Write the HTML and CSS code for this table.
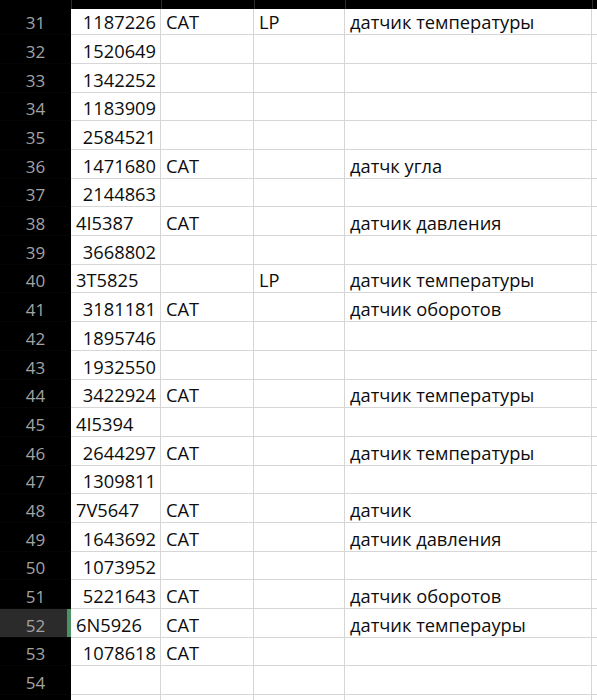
FILE: index.html
```html
<!DOCTYPE html>
<html lang="ru">
<head>
<meta charset="utf-8">
<title>Sheet</title>
<link rel="stylesheet" href="styles.css">
</head>
<body>
<div class="sheet">
  <div class="row colhead"><span class="hc"></span><span class="hc"></span><span class="hc"></span><span class="hc"></span><span class="hc"></span><span class="hc"></span></div>
  <div class="row first"><span class="rh">31</span><span class="c num">1187226</span><span class="c">CAT</span><span class="c">LP</span><span class="c">датчик температуры</span><span class="c"></span></div>
  <div class="row"><span class="rh">32</span><span class="c num">1520649</span><span class="c"></span><span class="c"></span><span class="c"></span><span class="c"></span></div>
  <div class="row"><span class="rh">33</span><span class="c num">1342252</span><span class="c"></span><span class="c"></span><span class="c"></span><span class="c"></span></div>
  <div class="row"><span class="rh">34</span><span class="c num">1183909</span><span class="c"></span><span class="c"></span><span class="c"></span><span class="c"></span></div>
  <div class="row"><span class="rh">35</span><span class="c num">2584521</span><span class="c"></span><span class="c"></span><span class="c"></span><span class="c"></span></div>
  <div class="row"><span class="rh">36</span><span class="c num">1471680</span><span class="c">CAT</span><span class="c"></span><span class="c">датчк угла</span><span class="c"></span></div>
  <div class="row"><span class="rh">37</span><span class="c num">2144863</span><span class="c"></span><span class="c"></span><span class="c"></span><span class="c"></span></div>
  <div class="row"><span class="rh">38</span><span class="c">4I5387</span><span class="c">CAT</span><span class="c"></span><span class="c">датчик давления</span><span class="c"></span></div>
  <div class="row"><span class="rh">39</span><span class="c num">3668802</span><span class="c"></span><span class="c"></span><span class="c"></span><span class="c"></span></div>
  <div class="row"><span class="rh">40</span><span class="c">3T5825</span><span class="c"></span><span class="c">LP</span><span class="c">датчик температуры</span><span class="c"></span></div>
  <div class="row"><span class="rh">41</span><span class="c num">3181181</span><span class="c">CAT</span><span class="c"></span><span class="c">датчик оборотов</span><span class="c"></span></div>
  <div class="row"><span class="rh">42</span><span class="c num">1895746</span><span class="c"></span><span class="c"></span><span class="c"></span><span class="c"></span></div>
  <div class="row"><span class="rh">43</span><span class="c num">1932550</span><span class="c"></span><span class="c"></span><span class="c"></span><span class="c"></span></div>
  <div class="row"><span class="rh">44</span><span class="c num">3422924</span><span class="c">CAT</span><span class="c"></span><span class="c">датчик температуры</span><span class="c"></span></div>
  <div class="row"><span class="rh">45</span><span class="c">4I5394</span><span class="c"></span><span class="c"></span><span class="c"></span><span class="c"></span></div>
  <div class="row"><span class="rh">46</span><span class="c num">2644297</span><span class="c">CAT</span><span class="c"></span><span class="c">датчик температуры</span><span class="c"></span></div>
  <div class="row"><span class="rh">47</span><span class="c num">1309811</span><span class="c"></span><span class="c"></span><span class="c"></span><span class="c"></span></div>
  <div class="row"><span class="rh">48</span><span class="c">7V5647</span><span class="c">CAT</span><span class="c"></span><span class="c">датчик</span><span class="c"></span></div>
  <div class="row"><span class="rh">49</span><span class="c num">1643692</span><span class="c">CAT</span><span class="c"></span><span class="c">датчик давления</span><span class="c"></span></div>
  <div class="row"><span class="rh">50</span><span class="c num">1073952</span><span class="c"></span><span class="c"></span><span class="c"></span><span class="c"></span></div>
  <div class="row"><span class="rh">51</span><span class="c num">5221643</span><span class="c">CAT</span><span class="c"></span><span class="c">датчик оборотов</span><span class="c"></span></div>
  <div class="row"><span class="rh active">52</span><span class="c">6N5926</span><span class="c">CAT</span><span class="c"></span><span class="c">датчик темпераyры</span><span class="c"></span></div>
  <div class="row"><span class="rh">53</span><span class="c num">1078618</span><span class="c">CAT</span><span class="c"></span><span class="c"></span><span class="c"></span></div>
  <div class="row"><span class="rh">54</span><span class="c"></span><span class="c"></span><span class="c"></span><span class="c"></span><span class="c"></span></div>
  <div class="row"><span class="rh"></span><span class="c"></span><span class="c"></span><span class="c"></span><span class="c"></span><span class="c"></span></div>
</div>
</body>
</html>
```

FILE: styles.css
```css
html, body {
  margin: 0;
  padding: 0;
  background: #ffffff;
}

.sheet {
  display: flex;
  flex-direction: column;
  width: 597px;
  height: 700px;
  overflow: hidden;
  font-family: "Open Sans", "Liberation Sans", sans-serif;
  font-size: 18.3px;
  color: #0d0d0d;
}

.row {
  display: grid;
  grid-template-columns: 71px 90px 93px 91px 247px 5px;
  height: 28.7px;
  flex: none;
}

.row.first {
  height: 26px;
}

.row.colhead {
  height: 9.3px;
  background: #000;
}

.hc {
  border-left: 1px solid #2e2e2e;
}

.hc:first-child {
  border-left: none;
}

.rh {
  background: #000;
  color: #a3a3a3;
  font-size: 17px;
  display: flex;
  align-items: flex-end;
  justify-content: center;
  border-bottom: 1px solid #050505;
}

.rh.active {
  background: #2b2b2b;
  box-shadow: inset -4px 0 0 #4c9163;
}

.c {
  display: flex;
  align-items: flex-end;
  justify-content: flex-start;
  padding: 0 4px 0 5px;
  border-right: 1px solid #d6d6d6;
  border-bottom: 1px solid #d6d6d6;
  white-space: nowrap;
  overflow: hidden;
  background: #fff;
}

.c.num {
  justify-content: flex-end;
}
```
